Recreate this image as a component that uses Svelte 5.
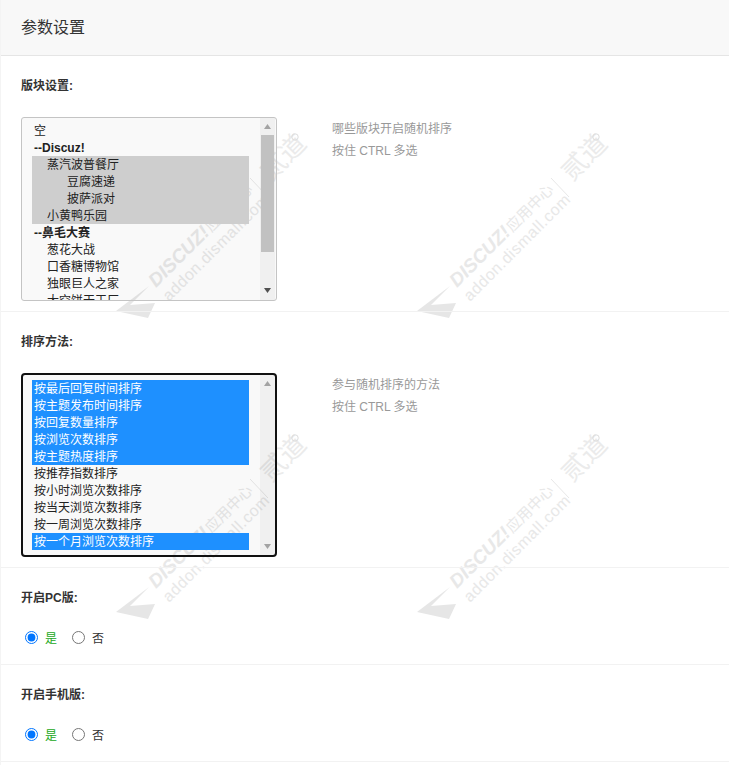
<script>
  const tiles = [
    [0, 0],
    [301, 0],
    [0, 301],
    [301, 301]
  ];

  const forums = [
    { text: '空' },
    { text: '--Discuz!', group: true },
    { text: '蒸汽波普餐厅', depth: 1, on: true },
    { text: '豆腐速递', depth: 2, on: true },
    { text: '披萨派对', depth: 2, on: true },
    { text: '小黄鸭乐园', depth: 1, on: true },
    { text: '--鼻毛大赛', group: true },
    { text: '葱花大战', depth: 1 },
    { text: '口香糖博物馆', depth: 1 },
    { text: '独眼巨人之家', depth: 1 },
    { text: '大空饼干工厂', depth: 1 }
  ];

  const sorts = [
    { text: '按最后回复时间排序', on: true },
    { text: '按主题发布时间排序', on: true },
    { text: '按回复数量排序', on: true },
    { text: '按浏览次数排序', on: true },
    { text: '按主题热度排序', on: true },
    { text: '按推荐指数排序' },
    { text: '按小时浏览次数排序' },
    { text: '按当天浏览次数排序' },
    { text: '按一周浏览次数排序' },
    { text: '按一个月浏览次数排序', on: true }
  ];
</script>

{#snippet listbox(items, focused)}
  <div class="select" class:focused>
    <div class="options">
      {#each items as item}
        <div
          class="option depth{item.depth ?? 0}"
          class:group={item.group}
          class:on={item.on}
        >{item.text}</div>
      {/each}
    </div>
    <div class="scrollbar">
      <svg class="arrow" viewBox="0 0 7 5" width="7" height="5"><polygon points="3.5,0 7,5 0,5" /></svg>
      <div class="track">
        {#if !focused}<div class="thumb"></div>{/if}
      </div>
      <svg class="arrow" class:active={!focused} viewBox="0 0 7 5" width="7" height="5"><polygon points="0,0 7,0 3.5,5" /></svg>
    </div>
  </div>
{/snippet}

{#snippet toggle(name)}
  <div class="radios">
    <label class="radio yes"><input type="radio" {name} checked /><span>是</span></label>
    <label class="radio"><input type="radio" {name} /><span>否</span></label>
  </div>
{/snippet}

<div class="page">
  <svg class="watermark" width="729" height="765" viewBox="0 0 729 765" aria-hidden="true">
    {#each tiles as [dx, dy]}
      <g transform="translate({dx} {dy})">
        <polygon points="116,311 149,286 130,305 155,303 148,318" fill="#e6e6e6" />
        <text class="wm-brand" transform="translate(156 288) rotate(-45)">DISCUZ!<tspan class="wm-cn" dx="1">应用中心</tspan></text>
        <text class="wm-url" transform="translate(169 302) rotate(-45)">addon.dismall.com</text>
        <line x1="250" y1="178" x2="268" y2="197" stroke="#e8e8e8" stroke-width="1" />
        <text class="wm-dao" transform="translate(271 182) rotate(-45)">贰道</text>
        <circle cx="295" cy="137" r="3.2" fill="none" stroke="#dedede" />
      </g>
    {/each}
  </svg>

  <header class="head"><h1>参数设置</h1></header>

  <section class="row">
    <div class="label">版块设置:</div>
    <div class="field">
      {@render listbox(forums, false)}
      <div class="hint">哪些版块开启随机排序<br />按住 CTRL 多选</div>
    </div>
  </section>

  <section class="row">
    <div class="label">排序方法:</div>
    <div class="field">
      {@render listbox(sorts, true)}
      <div class="hint">参与随机排序的方法<br />按住 CTRL 多选</div>
    </div>
  </section>

  <section class="row short">
    <div class="label">开启PC版:</div>
    {@render toggle('pc')}
  </section>

  <section class="row short">
    <div class="label">开启手机版:</div>
    {@render toggle('mobile')}
  </section>
</div>

<style>
  :global(body) {
    background: #fff;
  }

  .page {
    position: relative;
    width: 729px;
    height: 765px;
    overflow: hidden;
    box-sizing: border-box;
    font-family: "Liberation Sans", "Noto Sans CJK SC", sans-serif;
    font-size: 12px;
    color: #333;
    border-left: 1px solid #f4f4f4;
  }

  .watermark {
    position: absolute;
    left: -1px;
    top: 0;
  }

  .wm-brand {
    font: italic bold 19px "Liberation Sans", sans-serif;
    fill: #e8e8e8;
  }

  .wm-cn {
    font: normal 400 15px "Noto Sans CJK SC", sans-serif;
  }

  .wm-url {
    font: 400 16px "Liberation Sans", sans-serif;
    letter-spacing: 0.6px;
    fill: #e8e8e8;
  }

  .wm-dao {
    font: 400 26px "Noto Sans CJK SC", sans-serif;
    fill: #ebebeb;
  }

  .head {
    position: relative;
    height: 55px;
    padding-left: 21px;
    display: flex;
    align-items: center;
    background: #f8f8f8;
    border-bottom: 1px solid #e5e5e5;
    margin-left: -1px;
  }

  h1 {
    margin: 0;
    font-size: 16px;
    font-weight: 400;
    line-height: 22px;
    color: #333;
  }

  .row {
    position: relative;
    padding: 19px 0 0 20px;
    height: 236px;
    border-bottom: 1px solid #f2f2f2;
  }

  .row.short {
    height: 77px;
  }

  .label {
    font-weight: 700;
    line-height: 22px;
    height: 20px;
    margin-bottom: 22px;
    color: #333;
  }

  .field {
    display: flex;
    align-items: flex-start;
    gap: 55px;
  }

  .hint {
    color: #999;
    line-height: 22px;
    padding-top: 1px;
  }

  .select {
    display: flex;
    width: 256px;
    height: 184px;
    box-sizing: border-box;
    overflow: hidden;
    border: 1px solid #c4c4c4;
    border-radius: 3px;
    background: rgba(0, 0, 0, 0.025);
    color: #222;
  }

  .select.focused {
    border: 2px solid #111;
    border-radius: 4px;
  }

  .options {
    flex: 1;
    min-width: 0;
    padding: 4px 11px 0 10px;
  }

  .focused .options {
    padding: 5px 11px 0 9px;
  }

  .option {
    height: 17px;
    line-height: 19px;
    padding-left: 2px;
    white-space: nowrap;
  }

  .depth1 {
    padding-left: 15px;
  }

  .depth2 {
    padding-left: 35px;
  }

  .group {
    font-weight: 700;
  }

  .option.on {
    background: #cecece;
  }

  .focused .option.on {
    background: #1e90ff;
    color: #fff;
  }

  .scrollbar {
    flex: none;
    width: 15px;
    margin-right: 1px;
    display: flex;
    flex-direction: column;
    align-items: center;
    background: rgba(0, 0, 0, 0.035);
  }

  .focused .scrollbar {
    margin-right: 0;
  }

  .arrow {
    flex: none;
    margin: 6px 0 6px;
    fill: #a3a3a3;
  }

  .arrow.active {
    fill: #505050;
    margin-bottom: 7px;
  }

  .track {
    flex: 1;
    width: 100%;
    display: flex;
    justify-content: center;
    min-height: 0;
  }

  .thumb {
    width: 13px;
    height: 117px;
    background: #c1c1c1;
  }

  .radios {
    display: flex;
    align-items: center;
    height: 16px;
    gap: 15px;
    padding-left: 4px;
  }

  .radio {
    display: flex;
    align-items: center;
    gap: 7px;
    color: #333;
  }

  .radio input {
    width: 13px;
    height: 13px;
    margin: 0;
  }

  .yes span {
    color: #22a822;
  }
</style>
